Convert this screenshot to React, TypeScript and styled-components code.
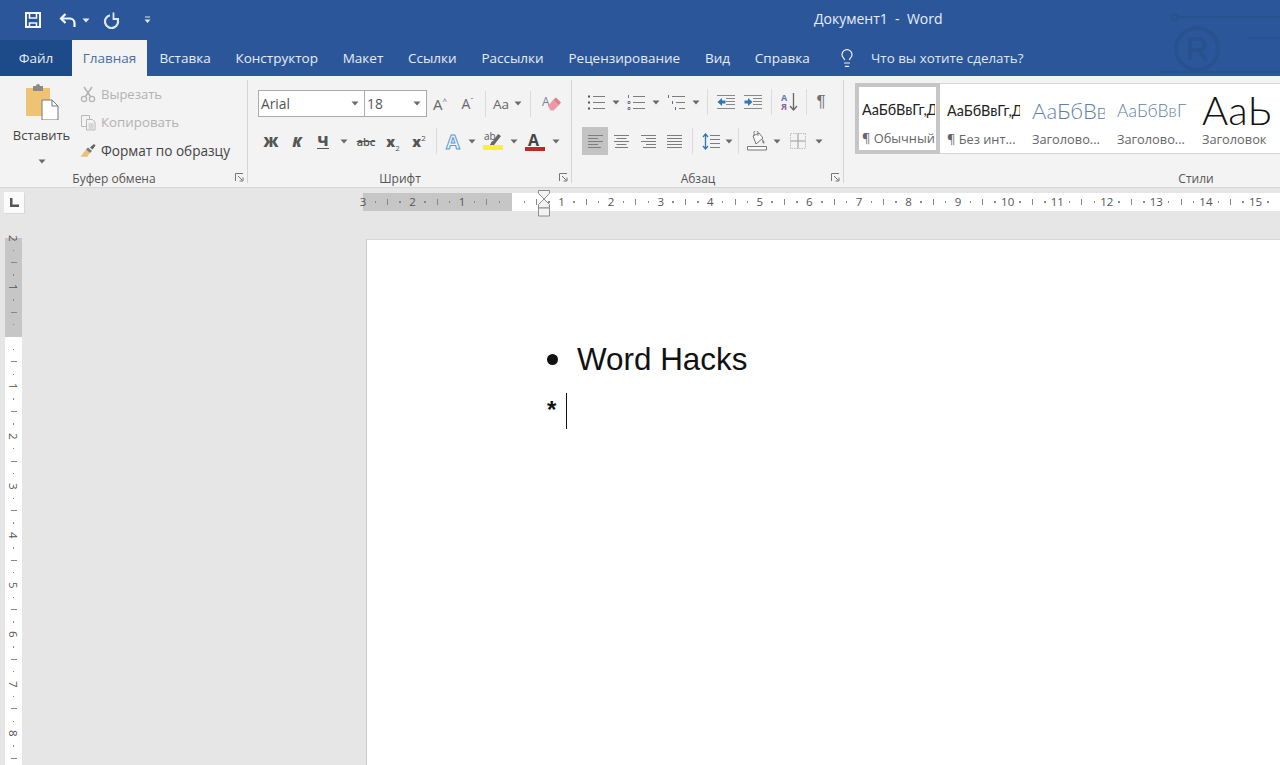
import React from "react";
import styled, { createGlobalStyle } from "styled-components";
import { Lightbulb } from "lucide-react";

const UI = `"Open Sans", "Noto Sans", "Liberation Sans", sans-serif`;

const Global = createGlobalStyle`
  html, body { margin: 0; padding: 0; height: 100%; overflow: hidden; background: #e6e6e6; }
  #root { height: 100%; }
`;

const Window = styled.div`
  width: 1280px;
  height: 765px;
  overflow: hidden;
  display: flex;
  flex-direction: column;
  font-family: ${UI};
`;

/* title bar */
const TitleBar = styled.div`
  position: relative;
  height: 40px;
  flex: none;
  background: #2b579a;
  display: flex;
  align-items: center;
  color: #fff;
`;
const Qat = styled.div`
  display: flex;
  align-items: center;
  padding-left: 24px;
  width: 792px;
`;
const QatBtn = styled.div<{ $w: number }>`
  width: ${(p) => p.$w}px;
  display: flex;
  justify-content: center;
  align-items: center;
`;
const DocTitle = styled.div`
  font-size: 14px;
  color: #e9eef6;
  white-space: pre;
  margin-left: -2px;
  margin-top: -3px;
`;
const Watermark = styled.svg`
  position: absolute;
  right: 0;
  top: 8px;
`;

/* tabs */
const TabBar = styled.div`
  height: 36px;
  flex: none;
  background: #2b579a;
  display: flex;
  align-items: stretch;
`;
const Tab = styled.div<{ $kind?: "file" | "active" }>`
  padding: 0 12.4px;
  display: flex;
  align-items: center;
  font-size: 13.5px;
  white-space: nowrap;
  color: ${(p) => (p.$kind === "active" ? "#4d6f9f" : "#e6ecf5")};
  background: ${(p) => (p.$kind === "active" ? "#f3f3f3" : p.$kind === "file" ? "#1d4a88" : "transparent")};
  ${(p) => (p.$kind === "file" ? "width: 72px; box-sizing: border-box; justify-content: center; padding: 0;" : "")}
  ${(p) => (p.$kind === "active" ? "width: 75px; box-sizing: border-box; justify-content: center; padding: 0;" : "")}
`;
const TellMe = styled.div`
  display: flex;
  align-items: center;
  gap: 14px;
  margin-left: 15px;
  font-size: 13.4px;
  color: #dfe7f2;
`;

/* ribbon */
const Ribbon = styled.div`
  height: 111px;
  flex: none;
  background: #f3f3f3;
  border-bottom: 1px solid #d6d6d6;
  display: flex;
`;
const Group = styled.div<{ $w: number }>`
  position: relative;
  width: ${(p) => p.$w}px;
  flex: none;
  box-sizing: border-box;
  display: flex;
  flex-direction: column;
  &::after {
    content: "";
    position: absolute;
    right: 0;
    top: 4px;
    bottom: 4px;
    width: 1px;
    background: #d4d4d4;
  }
`;
const GroupBody = styled.div`
  flex: 1;
  display: flex;
  min-height: 0;
`;
const GroupLabel = styled.div<{ $center: number }>`
  height: 18px;
  margin-bottom: -2px;
  font-size: 12px;
  color: #555;
  line-height: 16px;
  width: ${(p) => p.$center * 2}px;
  text-align: center;
`;
const Launcher = styled.svg`
  position: absolute;
  right: 4px;
  bottom: 5px;
`;
const Paste = styled.div`
  width: 80px;
  padding-left: 3px;
  box-sizing: border-box;
  display: flex;
  flex-direction: column;
  align-items: center;
  padding-top: 8px;
  font-size: 13px;
  color: #444;
`;
const PasteText = styled.div`
  margin-top: 6px;
`;
const PasteCaret = styled.span`
  margin-top: 6px;
`;
const ClipList = styled.div`
  display: flex;
  flex-direction: column;
  padding-top: 4px;
`;
const ClipRow = styled.div<{ $off?: boolean; $size: number }>`
  height: 28px;
  display: flex;
  align-items: center;
  gap: 4px;
  font-size: ${(p) => p.$size}px;
  white-space: nowrap;
  color: ${(p) => (p.$off ? "#b2b2b2" : "#444")};
`;
const Rows = styled.div<{ $left: number }>`
  padding-left: ${(p) => p.$left}px;
  display: flex;
  flex-direction: column;
`;
const ToolRow = styled.div<{ $top: number; $h: number }>`
  display: flex;
  align-items: center;
  margin-top: ${(p) => p.$top}px;
  height: ${(p) => p.$h}px;
`;
const Tool = styled.div<{ $w: number; $on?: boolean }>`
  width: ${(p) => p.$w}px;
  height: 28px;
  flex: none;
  display: flex;
  align-items: center;
  justify-content: center;
  background: ${(p) => (p.$on ? "#c3c3c3" : "transparent")};
`;
const Sep = styled.div<{ $w?: number }>`
  width: 1px;
  height: 26px;
  flex: none;
  background: #dcdcdc;
  margin: 0 ${(p) => p.$w ?? 4}px;
`;
const Combo = styled.div<{ $w: number }>`
  width: ${(p) => p.$w}px;
  height: 27px;
  flex: none;
  box-sizing: border-box;
  margin-right: -1px;
  background: #fff;
  border: 1px solid #ababab;
  display: flex;
  align-items: center;
  justify-content: space-between;
  padding: 0 5px 0 2px;
  font-size: 13.8px;
  color: #555;
`;
const Letter = styled.span<{ $i?: boolean; $u?: boolean }>`
  font-size: 14.5px;
  font-weight: 800;
  color: #555;
  font-style: ${(p) => (p.$i ? "italic" : "normal")};
  border-bottom: ${(p) => (p.$u ? "1.5px solid #555" : "none")};
  line-height: ${(p) => (p.$u ? "15px" : "normal")};
`;
const Abc = styled.span`
  font-size: 11px;
  font-weight: 600;
  color: #555;
  text-decoration: line-through;
`;
const Script = styled.span`
  font-size: 14px;
  font-weight: 800;
  color: #555;
  sub, sup { font-size: 8px; font-weight: 400; line-height: 0; }
`;
const Grow = styled.span<{ $size: number }>`
  font-size: ${(p) => p.$size}px;
  color: #666;
  sup { font-size: 8px; line-height: 0; }
`;
const Pilcrow = styled.span`
  font-family: "Liberation Sans", sans-serif;
  font-size: 17px;
  color: #707070;
`;

/* style gallery */
const Gallery = styled.div`
  margin: 7px 0 0 11px;
  height: 71px;
  box-sizing: border-box;
  width: 560px;
  background: #fff;
  border-top: 1px solid #d6d6d6;
  border-bottom: 1px solid #d6d6d6;
  display: flex;
`;
const StyleItem = styled.div<{ $on?: boolean }>`
  width: 85px;
  flex: none;
  box-sizing: border-box;
  height: ${(p) => (p.$on ? "71px" : "69px")};
  margin-top: ${(p) => (p.$on ? "-1px" : "0")};
  border: ${(p) => (p.$on ? "4px solid #c6c6c6" : "none")};
  padding: ${(p) => (p.$on ? "4px 0 0 3px" : "8px 0 0 7px")};
  overflow: hidden;
  display: flex;
  flex-direction: column;
`;
const Preview = styled.div<{ $size: number; $color: string; $light?: boolean }>`
  height: 37px;
  line-height: 37px;
  width: ${(p) => (p.$size > 30 ? "76px" : "73px")};
  overflow: hidden;
  white-space: nowrap;
  font-family: Lato, "Liberation Sans", sans-serif;
  font-size: ${(p) => p.$size}px;
  font-weight: ${(p) => (p.$light ? 300 : 400)};
  color: ${(p) => p.$color};
`;
const StyleName = styled.div`
  font-size: 12.8px;
  color: #666;
  white-space: nowrap;
  margin-top: 1px;
`;

/* work area */
const Work = styled.div`
  flex: 1;
  min-height: 0;
  display: flex;
  background: #e6e6e6;
`;
const LeftCol = styled.div`
  width: 363px;
  flex: none;
  display: flex;
  flex-direction: column;
  overflow: hidden;
`;
const Corner = styled.div`
  width: 20px;
  height: 21px;
  margin: 4px 0 0 4px;
  flex: none;
  background: #fbfbfb;
  box-shadow: 1px 1px 0 #d8d8d8;
  display: flex;
  align-items: center;
  justify-content: center;
`;
const RightCol = styled.div`
  flex: 1;
  min-width: 0;
  display: flex;
  flex-direction: column;
`;
const HRuler = styled.div`
  position: relative;
  height: 18px;
  margin-top: 5px;
  flex: none;
  display: flex;
`;
const VRuler = styled.div`
  margin: 25px 0 0 5px;
  width: 17px;
  display: flex;
  flex-direction: column;
`;
const Band = styled.div<{ $grey?: boolean; $vert?: boolean; $len: number }>`
  flex: none;
  ${(p) => (p.$vert ? `height: ${p.$len}px;` : `width: ${p.$len}px;`)}
  background: ${(p) => (p.$grey ? "#c6c6c6" : "#fff")};
  display: flex;
  flex-direction: ${(p) => (p.$vert ? "column" : "row")};
`;
const Slot = styled.div<{ $vert?: boolean; $pull?: boolean }>`
  flex: none;
  width: ${(p) => (p.$vert ? "100%" : "12.4px")};
  height: ${(p) => (p.$vert ? "12.4px" : "100%")};
  ${(p) => (p.$pull ? (p.$vert ? "margin-top: -6.2px;" : "margin-left: -6.2px;") : "")}
  display: flex;
  align-items: center;
  justify-content: center;
  font-size: 11.5px;
  line-height: 1;
  color: #555;
  ${(p) => (p.$vert ? "writing-mode: vertical-rl;" : "")}
`;
const Dot = styled.i`
  width: 1.5px;
  height: 1.5px;
  background: #888;
`;
const Tick = styled.i<{ $vert?: boolean }>`
  width: ${(p) => (p.$vert ? "6px" : "1px")};
  height: ${(p) => (p.$vert ? "1px" : "6px")};
  background: #888;
`;
const IndentMarker = styled.svg`
  position: absolute;
  left: 175px;
  top: -3px;
`;
const Page = styled.div`
  flex: 1;
  margin: 28px 0 0 3px;
  background: #fff;
  border-left: 1px solid #c9c9c9;
  border-top: 1px solid #d6d6d6;
  padding: 100px 0 0 180px;
  font-family: "Liberation Sans", Arial, sans-serif;
  color: #111;
`;
const Para = styled.div<{ $h: number }>`
  display: flex;
  align-items: center;
  height: ${(p) => p.$h}px;
`;
const Bullet = styled.span`
  width: 11px;
  height: 11px;
  border-radius: 50%;
  background: #111;
  margin-right: 19px;
`;
const Line = styled.span`
  font-size: 31.4px;
  white-space: nowrap;
`;
const Star = styled.span`
  font-size: 24px;
  font-weight: 700;
  width: 19px;
  margin-top: -3px;
`;
const Caret = styled.span`
  width: 1px;
  height: 36px;
  background: #111;
`;

/* icons */
const Drop = ({ c = "#6a6a6a" }: { c?: string }) => (
  <svg width="8" height="5" viewBox="0 0 8 5"><path d="M0.5 0.5h7L4 4.5z" fill={c} /></svg>
);
const Launch = () => (
  <Launcher width="9" height="9" viewBox="0 0 9 9" fill="none" stroke="#777">
    <path d="M0.5 8V0.5H8" />
    <path d="M3 3l4.5 4.5M8 4.5V8H4.5" />
  </Launcher>
);
const Save = () => (
  <svg width="16" height="16" viewBox="0 0 16 16" fill="none" stroke="#f4f7fb" strokeWidth="2">
    <path d="M1 1h14v14H1z" />
    <path d="M4.500 1v5h7V1" strokeWidth="1.600" />
    <path d="M4.500 15v-4h7v4" strokeWidth="1.600" />
  </svg>
);
const Undo = () => (
  <svg width="18" height="15" viewBox="0 0 18 15" fill="none" stroke="#f4f7fb" strokeWidth="2.200">
    <path d="M6.500 1L2 5.500l4.500 4.500" />
    <path d="M2.500 5.500H11a5 4.500 0 0 1 4.500 4.500V14" />
  </svg>
);
const Redo = () => (
  <svg width="17" height="17" viewBox="0 0 17 17" fill="none" stroke="#dfe7f2" strokeWidth="2.200">
    <path d="M7 3.200A6.500 6.500 0 1 0 14.500 7" />
    <path d="M10.500 0.500v6.500H16" strokeWidth="1.800" />
  </svg>
);
const QatMore = () => (
  <svg width="7" height="8" viewBox="0 0 7 8" fill="#dfe7f2"><path d="M1 0.5h5v1H1zM0.5 3.5h6L3.5 7z" /></svg>
);
const Clipboard = () => (
  <svg width="34" height="36" viewBox="0 0 34 36">
    <path d="M1 4h24v28H1z" fill="#eec374" />
    <path d="M8 2h3a2 2 0 0 1 4 0h3v5H8z" fill="#8a8a8a" />
    <path d="M17 16h10l6 6v14H17z" fill="#fff" stroke="#777" />
    <path d="M27 16v6h6" fill="none" stroke="#777" />
  </svg>
);
const Scissors = () => (
  <svg width="17" height="17" viewBox="0 0 17 17" fill="none" stroke="#b4b4b4" strokeWidth="1.3">
    <circle cx="4" cy="13" r="2.6" />
    <circle cx="12" cy="13" r="2.6" />
    <path d="M5.5 10.5L12 1M10.5 10.5L4 1" strokeWidth="1.6" />
  </svg>
);
const Copy = () => (
  <svg width="17" height="17" viewBox="0 0 17 17" fill="#f3f3f3" stroke="#b9b9b9">
    <path d="M1.5 1.5h8v11h-8z" />
    <path d="M6.5 5.5h6l2.5 2.5v8h-8.5z" />
    <path d="M8.5 10h5M8.5 12h5M8.5 14h5" />
  </svg>
);
const Brush = () => (
  <svg width="17" height="15" viewBox="0 0 17 15">
    <path d="M0.5 13.5L6 6.5l4 3.5-3 4z" fill="#e9c27a" />
    <path d="M6 6.5l2-2 4 3.5-2 2z" fill="#7a7a7a" />
    <path d="M10 4.5L14 1l1.5 1.500-3 4z" fill="#5f5f5f" />
  </svg>
);
const Eraser = () => (
  <svg width="22" height="24" viewBox="0 0 22 24">
    <text x="2" y="14" fontSize="12" fill="#76839c" fontFamily="Open Sans">A</text>
    <path d="M13 8l3-2.500 5 5-2.500 3z" fill="#e27f8e" />
    <path d="M8 14l5-6 5.500 5.500-5 5-3 0z" fill="#ef98a5" />
  </svg>
);
const Align = ({ kind }: { kind: "l" | "c" | "r" | "j" }) => {
  const ends: Record<string, [number, number][]> = {
    l: [[0, 15], [0, 10], [0, 15], [0, 10], [0, 13]],
    c: [[0, 15], [2.5, 12.5], [0, 15], [2.5, 12.5], [1, 14]],
    r: [[0, 15], [5, 15], [0, 15], [5, 15], [2, 15]],
    j: [[0, 15], [0, 15], [0, 15], [0, 15], [0, 15]],
  };
  return (
    <svg width="15" height="13" viewBox="0 0 15 13" stroke="#7d7d7d" fill="none">
      {ends[kind].map(([a, b], i) => (
        <path key={i} d={`M${a} ${i * 3 + 0.5}H${b}`} />
      ))}
    </svg>
  );
};
const Bullets = () => (
  <svg width="18" height="17" viewBox="0 0 18 17" stroke="#7d7d7d" fill="none">
    <path d="M6 2.500h12M6 8.500h12M6 14.500h12" />
    <path d="M1 1.500h2v2H1zM1 7.500h2v2H1zM1 13.500h2v2H1z" fill="#555" stroke="none" />
  </svg>
);
const Numbered = () => (
  <svg width="18" height="17" viewBox="0 0 18 17" stroke="#7d7d7d" fill="none">
    <path d="M6 2.500h12M6 8.500h12M6 14.500h12" />
    <path d="M1.500 1v3M1 7.500h2v2H1zM1 13.500h2v2H1z" stroke="#668" strokeWidth="0.9" />
  </svg>
);
const Multi = () => (
  <svg width="18" height="17" viewBox="0 0 18 17" stroke="#7d7d7d" fill="none">
    <path d="M5 2.500h13M9 8.500h9M12 14.500h6" />
    <path d="M1.500 1v3M5.500 7v3M8.500 13v3" stroke="#668" />
  </svg>
);
const IndentIcon = ({ out }: { out?: boolean }) => (
  <svg width="18" height="16" viewBox="0 0 18 16" stroke="#888" fill="none">
    <path d="M0 1.500h18M9 4.500h9M9 7.500h9M9 10.500h9M0 14.500h18" />
    {out ? (
      <path d="M0.500 8L5 4v2.500h3.500v3H5V12z" fill="#2f75bb" stroke="none" />
    ) : (
      <path d="M8.500 8L4 4v2.500H0.500v3H4V12z" fill="#2f75bb" stroke="none" />
    )}
  </svg>
);
const Sort = () => (
  <svg width="18" height="22" viewBox="0 0 18 22">
    <text x="0" y="10" fontSize="9" fontWeight="700" fill="#5d7fb0" fontFamily="Open Sans">А</text>
    <text x="0" y="19" fontSize="9" fontWeight="700" fill="#8f5fa5" fontFamily="Open Sans">Я</text>
    <path d="M12.500 2v17M9 15l3.500 4 3.500-4" fill="none" stroke="#666" strokeWidth="1.300" />
  </svg>
);
const Spacing = () => (
  <svg width="18" height="17" viewBox="0 0 18 17" fill="none" stroke="#7d7d7d">
    <path d="M8 2.500h10M8 6.500h10M8 10.500h10M8 14.500h10" />
    <path d="M3.500 1v15" stroke="#2f75bb" strokeWidth="1.300" />
    <path d="M1 4l2.500-3L6 4M1 13l2.500 3L6 13" stroke="#2f75bb" strokeWidth="1.300" />
  </svg>
);
const Bucket = () => (
  <svg width="20" height="20" viewBox="0 0 20 20" fill="none" stroke="#777">
    <path d="M6 5l6-3 4 5-7 6z" fill="#fbfbfb" />
    <path d="M7 5V1.500a2 2 0 0 1 4 0V5" strokeWidth="0.900" />
    <path d="M15.500 8c2 2 2.500 4 1.500 4.500S14.500 11 15.500 8z" fill="#888" stroke="none" />
    <path d="M0.500 15.500h19v3.500h-19z" fill="#fbfbfb" />
  </svg>
);
const Borders = () => (
  <svg width="16" height="16" viewBox="0 0 16 16" fill="none" stroke="#bdbdbd">
    <path d="M0.500 0.500h15v15h-15z" strokeDasharray="1.500 1" />
    <path d="M8 0.500v15M0.500 8h15" stroke="#999" />
  </svg>
);
const EffectA = () => (
  <svg width="20" height="28" viewBox="0 0 20 28">
    <text x="2" y="22" fontSize="20" fontFamily="Open Sans" fontWeight="700" fill="#eef4fb" stroke="#5b9bd5" strokeWidth="1">A</text>
  </svg>
);
const Highlight = () => (
  <svg width="21" height="26" viewBox="0 0 21 26">
    <text x="1" y="12" fontSize="10" fill="#555" fontFamily="Open Sans">ab</text>
    <path d="M8 16l7-10 3 2-7 9-4 1z" fill="#666" />
    <path d="M0 17h20v5H0z" fill="#f7f239" />
    <path d="M7 17l4 0 1-3-3-1z" fill="#666" />
  </svg>
);
const ColorA = () => (
  <svg width="20" height="26" viewBox="0 0 20 26">
    <text x="3" y="18" fontSize="16" fontWeight="700" fill="#444" fontFamily="Open Sans">A</text>
    <path d="M0 19h20v4H0z" fill="#c0272d" />
  </svg>
);

const Ticks = ({ from, to, vert }: { from: number; to: number; vert?: boolean }) => {
  const cells = [];
  for (let i = from; i < to; i++) {
    const n = Math.abs(i);
    let inner: React.ReactNode = null;
    if (i !== 0) {
      if (n % 4 === 0) inner = n / 4;
      else if (n % 2 === 0) inner = <Tick $vert={vert} />;
      else inner = <Dot />;
    }
    cells.push(
      <Slot key={i} $vert={vert} $pull={i === from}>
        {inner}
      </Slot>
    );
  }
  return <>{cells}</>;
};

const tabs = ["Вставка", "Конструктор", "Макет", "Ссылки", "Рассылки", "Рецензирование", "Вид", "Справка"];

export default function App() {
  return (
    <Window>
      <Global />
      <TitleBar>
        <Qat>
          <QatBtn $w={18}><Save /></QatBtn>
          <QatBtn $w={16} />
          <QatBtn $w={20}><Undo /></QatBtn>
          <QatBtn $w={16}><Drop c="#e5ebf4" /></QatBtn>
          <QatBtn $w={7} />
          <QatBtn $w={20}><Redo /></QatBtn>
          <QatBtn $w={52}><QatMore /></QatBtn>
        </Qat>
        <DocTitle>Документ1  -  Word</DocTitle>
        <Watermark width="130" height="70" viewBox="0 0 130 70" fill="none" stroke="#28528f" strokeWidth="2.500">
          <circle cx="47" cy="41" r="21" strokeWidth="4" />
          <path d="M40 52V31h9a5 5 0 0 1 0 11h-9M49 42l7 10" strokeWidth="4" />
          <path d="M22 9a3 3 0 1 1 0 .1M26 9h104M97 30h33M10 64h120" />
        </Watermark>
      </TitleBar>

      <TabBar>
        <Tab $kind="file">Файл</Tab>
        <Tab $kind="active">Главная</Tab>
        {tabs.map((t) => <Tab key={t}>{t}</Tab>)}
        <TellMe>
          <Lightbulb size={20} strokeWidth={1.4} color="#f0f4fa" />
          Что вы хотите сделать?
        </TellMe>
      </TabBar>

      <Ribbon>
        <Group $w={248}>
          <GroupBody>
            <Paste>
              <Clipboard />
              <PasteText>Вставить</PasteText>
              <PasteCaret><Drop /></PasteCaret>
            </Paste>
            <ClipList>
              <ClipRow $off $size={13}><Scissors />Вырезать</ClipRow>
              <ClipRow $off $size={13.3}><Copy />Копировать</ClipRow>
              <ClipRow $size={13.6}><Brush />Формат по образцу</ClipRow>
            </ClipList>
          </GroupBody>
          <GroupLabel $center={114}>Буфер обмена</GroupLabel>
          <Launch />
        </Group>

        <Group $w={324}>
          <GroupBody>
            <Rows $left={10}>
              <ToolRow $top={14} $h={27}>
                <Combo $w={107}>Arial<Drop /></Combo>
                <Combo $w={63}>18<Drop /></Combo>
                <Tool $w={28}><Grow $size={15}>A<sup>^</sup></Grow></Tool>
                <Tool $w={27}><Grow $size={14}>A<sup>ˇ</sup></Grow></Tool>
                <Sep />
                <Tool $w={22}><Grow $size={13.5}>Aa</Grow></Tool>
                <Tool $w={12}><Drop /></Tool>
                <Sep $w={6} />
                <Tool $w={28}><Eraser /></Tool>
              </ToolRow>
              <ToolRow $top={10} $h={28}>
                <Tool $w={26}><Letter>Ж</Letter></Tool>
                <Tool $w={26}><Letter $i>К</Letter></Tool>
                <Tool $w={26}><Letter $u>Ч</Letter></Tool>
                <Tool $w={16}><Drop /></Tool>
                <Tool $w={28}><Abc>abc</Abc></Tool>
                <Tool $w={26}><Script>x<sub>2</sub></Script></Tool>
                <Tool $w={26}><Script>x<sup>2</sup></Script></Tool>
                <Sep $w={4} />
                <Tool $w={26}><EffectA /></Tool>
                <Tool $w={10}><Drop /></Tool>
                <Tool $w={32}><Highlight /></Tool>
                <Tool $w={10}><Drop /></Tool>
                <Tool $w={32}><ColorA /></Tool>
                <Tool $w={10}><Drop /></Tool>
              </ToolRow>
            </Rows>
          </GroupBody>
          <GroupLabel $center={152}>Шрифт</GroupLabel>
          <Launch />
        </Group>

        <Group $w={272}>
          <GroupBody>
            <Rows $left={10}>
              <ToolRow $top={12} $h={28}>
                <Tool $w={28}><Bullets /></Tool>
                <Tool $w={12}><Drop /></Tool>
                <Tool $w={28}><Numbered /></Tool>
                <Tool $w={12}><Drop /></Tool>
                <Tool $w={28}><Multi /></Tool>
                <Tool $w={12}><Drop /></Tool>
                <Sep $w={5} />
                <Tool $w={26}><IndentIcon out /></Tool>
                <Tool $w={27}><IndentIcon /></Tool>
                <Sep $w={5} />
                <Tool $w={26}><Sort /></Tool>
                <Sep $w={3} />
                <Tool $w={22}><Pilcrow>¶</Pilcrow></Tool>
              </ToolRow>
              <ToolRow $top={11} $h={28}>
                <Tool $w={26} $on><Align kind="l" /></Tool>
                <Tool $w={27}><Align kind="c" /></Tool>
                <Tool $w={26}><Align kind="r" /></Tool>
                <Tool $w={27}><Align kind="j" /></Tool>
                <Sep $w={4} />
                <Tool $w={28}><Spacing /></Tool>
                <Tool $w={8}><Drop /></Tool>
                <Sep $w={5} />
                <Tool $w={26}><Bucket /></Tool>
                <Tool $w={14}><Drop /></Tool>
                <Tool $w={28}><Borders /></Tool>
                <Tool $w={14}><Drop /></Tool>
              </ToolRow>
            </Rows>
          </GroupBody>
          <GroupLabel $center={126}>Абзац</GroupLabel>
          <Launch />
        </Group>

        <Group $w={704}>
          <GroupBody>
            <Gallery>
              <StyleItem $on>
                <Preview $size={14.4} $color="#222">АаБбВвГг,Д</Preview>
                <StyleName>¶ Обычный</StyleName>
              </StyleItem>
              <StyleItem>
                <Preview $size={14.4} $color="#222">АаБбВвГг,Д</Preview>
                <StyleName>¶ Без инт...</StyleName>
              </StyleItem>
              <StyleItem>
                <Preview $size={22} $color="#5f7fa3" $light>АаБбВв</Preview>
                <StyleName>Заголово...</StyleName>
              </StyleItem>
              <StyleItem>
                <Preview $size={17.5} $color="#5f7fa3" $light>АаБбВвГ</Preview>
                <StyleName>Заголово...</StyleName>
              </StyleItem>
              <StyleItem>
                <Preview $size={40} $color="#111" $light>АаЬ</Preview>
                <StyleName>Заголовок</StyleName>
              </StyleItem>
            </Gallery>
          </GroupBody>
          <GroupLabel $center={352}>Стили</GroupLabel>
        </Group>
      </Ribbon>

      <Work>
        <LeftCol>
          <Corner>
            <svg width="9" height="9" viewBox="0 0 9 9"><path d="M0 0h2.500v6.500H9V9H0z" fill="#555" /></svg>
          </Corner>
          <VRuler>
            <Band $grey $vert $len={99.2}><Ticks from={-8} to={0} vert /></Band>
            <Band $vert $len={460}><Ticks from={0} to={36} vert /></Band>
          </VRuler>
        </LeftCol>
        <RightCol>
          <HRuler>
            <Band $grey $len={149}><Ticks from={-12} to={0} /></Band>
            <Band $len={768}><Ticks from={0} to={64} /></Band>
            <IndentMarker width="12" height="27" viewBox="0 0 12 27" fill="#f3f3f3" stroke="#8c8c8c">
              <path d="M0.500 0.500h11v3L6 9 0.500 3.500z" />
              <path d="M6 9l5.500 5.500V18h-11v-3.500z" />
              <path d="M0.500 18h11v8h-11z" />
            </IndentMarker>
          </HRuler>
          <Page>
            <Para $h={39}>
              <Bullet />
              <Line>Word Hacks</Line>
            </Para>
            <Para $h={64}>
              <Star>*</Star>
              <Caret />
            </Para>
          </Page>
        </RightCol>
      </Work>
    </Window>
  );
}
